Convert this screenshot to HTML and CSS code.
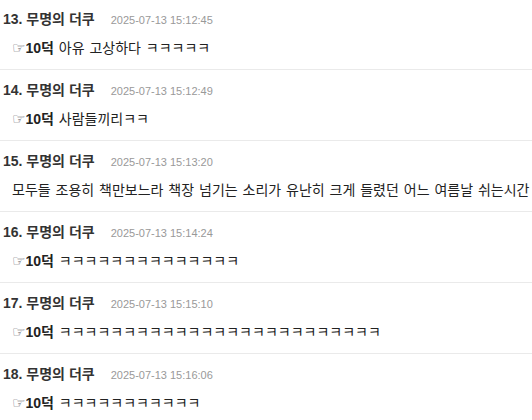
FILE: index.html
```html
<!DOCTYPE html>
<html lang="ko">
<head>
    <meta charset="UTF-8">
    <meta name="viewport" content="width=device-width, initial-scale=1.0">
    <title>댓글</title>
    <link rel="stylesheet" href="styles.css">
</head>
<body>

<ul class="comments">
    <li class="comment">
        <div class="comment-head"><span class="num">13.</span> <span class="nick">무명의 더쿠</span><span class="date">2025-07-13 15:12:45</span></div>
        <div class="comment-body"><span class="hand">☞</span><b>10덕</b> 아유 고상하다 ㅋㅋㅋㅋㅋ</div>
    </li>
    <li class="comment">
        <div class="comment-head"><span class="num">14.</span> <span class="nick">무명의 더쿠</span><span class="date">2025-07-13 15:12:49</span></div>
        <div class="comment-body"><span class="hand">☞</span><b>10덕</b> 사람들끼리ㅋㅋ</div>
    </li>
    <li class="comment">
        <div class="comment-head"><span class="num">15.</span> <span class="nick">무명의 더쿠</span><span class="date">2025-07-13 15:13:20</span></div>
        <div class="comment-body">모두들 조용히 책만보느라 책장 넘기는 소리가 유난히 크게 들렸던 어느 여름날 쉬는시간</div>
    </li>
    <li class="comment">
        <div class="comment-head"><span class="num">16.</span> <span class="nick">무명의 더쿠</span><span class="date">2025-07-13 15:14:24</span></div>
        <div class="comment-body"><span class="hand">☞</span><b>10덕</b> ㅋㅋㅋㅋㅋㅋㅋㅋㅋㅋㅋㅋㅋㅋ</div>
    </li>
    <li class="comment">
        <div class="comment-head"><span class="num">17.</span> <span class="nick">무명의 더쿠</span><span class="date">2025-07-13 15:15:10</span></div>
        <div class="comment-body"><span class="hand">☞</span><b>10덕</b> ㅋㅋㅋㅋㅋㅋㅋㅋㅋㅋㅋㅋㅋㅋㅋㅋㅋㅋㅋㅋㅋㅋㅋㅋㅋ</div>
    </li>
    <li class="comment">
        <div class="comment-head"><span class="num">18.</span> <span class="nick">무명의 더쿠</span><span class="date">2025-07-13 15:16:06</span></div>
        <div class="comment-body"><span class="hand">☞</span><b>10덕</b> ㅋㅋㅋㅋㅋㅋㅋㅋㅋㅋㅋ</div>
    </li>
</ul>

</body>
</html>
```

FILE: styles.css
```css
body {
    margin: 0;
    font-family: "Liberation Sans", "Noto Sans CJK KR", sans-serif;
    color: #333;
    background-color: #fff;
    overflow: hidden;
}
.comments {
    list-style: none;
    margin: -1px 0 0 0;
    padding: 0;
}
.comment {
    padding: 10px 0 11px 3px;
    border-bottom: 1px solid #eaeaea;
}
.comment-head {
    height: 20px;
    line-height: 20px;
    font-size: 14px;
    font-weight: bold;
    color: #333;
    white-space: nowrap;
}
.date {
    margin-left: 16px;
    font-size: 11px;
    font-weight: normal;
    color: #999;
}
.comment-body {
    margin-top: 9px;
    padding-left: 9px;
    height: 20px;
    line-height: 20px;
    font-size: 14px;
    word-spacing: 1px;
    color: #222;
    white-space: nowrap;
}
.hand {
    font-family: "DejaVu Sans", sans-serif;
    font-size: 15px;
    color: #556;
}
```
